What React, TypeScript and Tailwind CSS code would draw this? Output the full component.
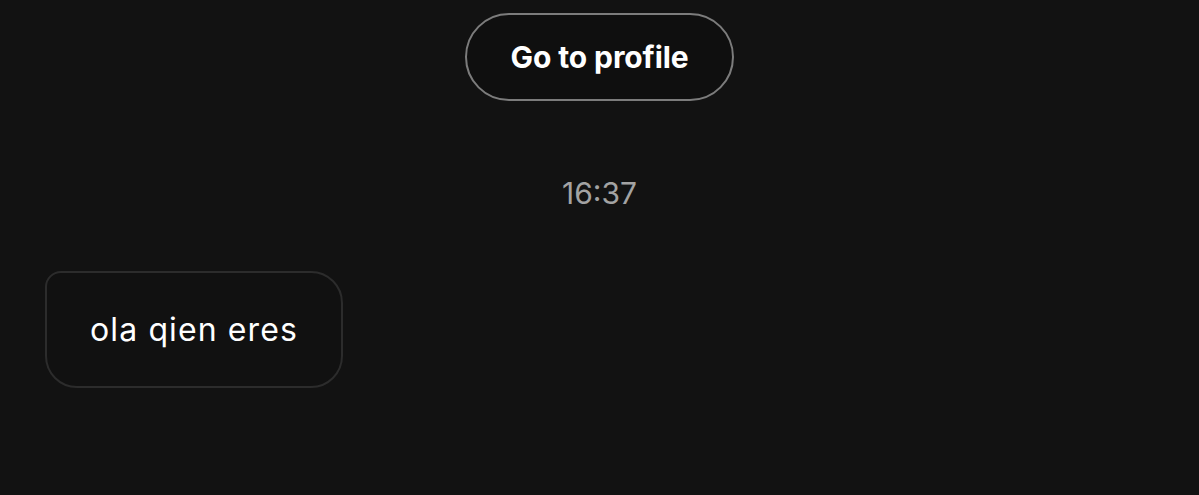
export default function App() {
  return (
    <div
      className="h-[495px] w-full overflow-hidden bg-[#121212] text-white"
      style={{ fontFamily: "Inter, 'Noto Sans', sans-serif" }}
    >
      {/* Profile button */}
      <div className="flex justify-center pt-[13px]">
        <button className="flex h-[88px] w-[269px] items-center justify-center rounded-full border-2 border-[#7c7c7c] bg-[#0f0f0f] text-[30px] font-bold tracking-[-0.1px] text-white">
          Go to profile
        </button>
      </div>

      {/* Timestamp */}
      <div className="mt-[74px] text-center text-[30px] leading-[36px] text-[#a3a3a3]">
        16:37
      </div>

      {/* Message */}
      <div className="mt-[60px] pl-[45px]">
        <div className="inline-flex h-[117px] w-[298px] items-center justify-center rounded-[32px] rounded-tl-[16px] border-2 border-[#2c2c2c] bg-[#111111] text-[32px] tracking-[1.1px] text-white">
          ola qien eres
        </div>
      </div>
    </div>
  );
}
